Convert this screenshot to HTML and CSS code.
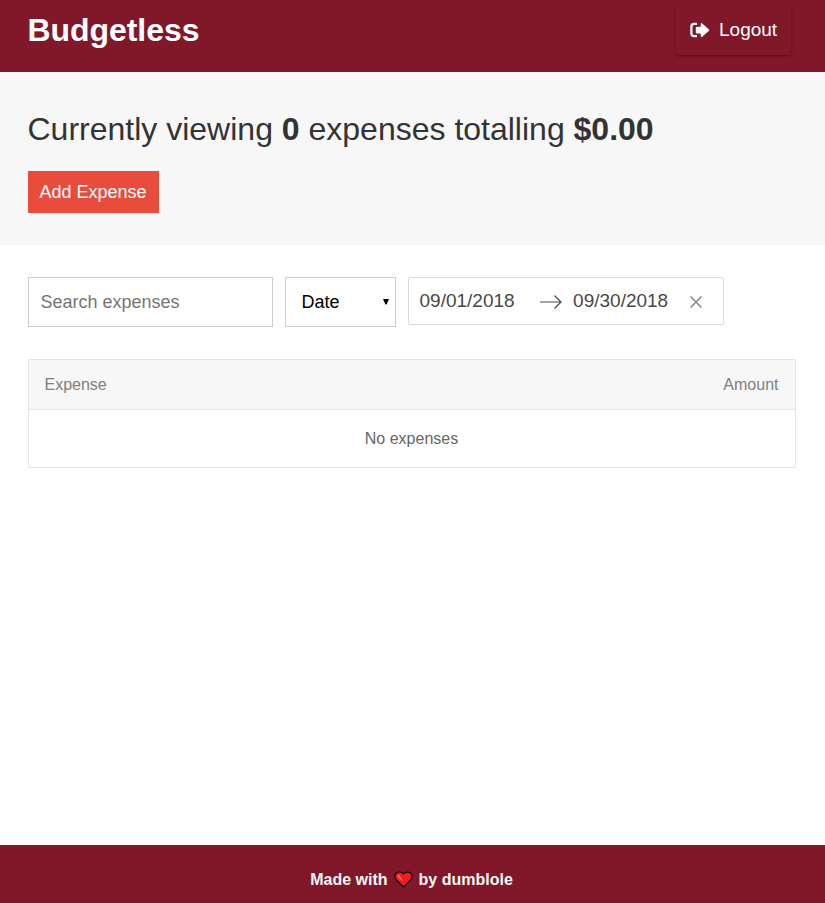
FILE: index.html
```html
<!DOCTYPE html>
<html lang="en">
<head>
<meta charset="utf-8">
<title>Budgetless</title>
<link rel="stylesheet" href="styles.css">
</head>
<body>
<header class="header">
  <h1 class="header-title">Budgetless</h1>
  <button class="logout" type="button">
    <svg class="logout-icon" viewBox="0 0 20 16" aria-hidden="true">
      <path d="M7 1.8H4.2Q1.4 1.8 1.4 4.4V11.6Q1.4 14.2 4.2 14.2H7" fill="none" stroke="#fff" stroke-width="2.2"/>
      <path d="M7 4.8Q5.8 4.8 5.8 5.8V10.4Q5.8 11.4 7 11.4H10.8V14.2Q11.1 15.5 12.2 14.7L19 8.8Q19.6 8.1 19 7.4L12.2 1.4Q11.1.6 10.8 2V4.8Z" fill="#fff"/>
    </svg>
    <span>Logout</span>
  </button>
</header>
<section class="summary">
  <h2 class="summary-title">Currently viewing <b>0</b> expenses totalling <b>$0.00</b></h2>
  <button class="add" type="button">Add Expense</button>
</section>
<main class="content">
  <div class="filters">
    <input class="search" type="text" placeholder="Search expenses">
    <div class="select"><span>Date</span>
      <svg class="caret" viewBox="0 0 6 6" aria-hidden="true"><path d="M0 0H6L3.5 5.5H2.5Z"/></svg>
    </div>
    <div class="dates">
      <span class="date">09/01/2018</span>
      <svg class="arrow" viewBox="0 0 24 16" aria-hidden="true"><path d="M1 8H22M15.5 1.5L22 8L15.5 14.5"/></svg>
      <span class="date">09/30/2018</span>
      <svg class="clear" viewBox="0 0 12 12" aria-hidden="true"><path d="M.5.5L11.5 11.5M11.5.5L.5 11.5"/></svg>
    </div>
  </div>
  <div class="list">
    <div class="list-header"><span>Expense</span><span>Amount</span></div>
    <div class="list-empty">No expenses</div>
  </div>
</main>
<footer class="footer">
  <span>Made with</span>
  <svg class="heart" viewBox="0 0 19 17" aria-hidden="true">
    <path d="M9.5 16L2 8.6Q.2 6 1.2 3.5Q2.5 1 5.2 1Q8 1 9.5 3Q11 1 13.8 1Q16.5 1 17.8 3.5Q18.8 6 17 8.6Z" fill="#ed1c24" stroke="#000" stroke-width="1.2"/>
    <path d="M3.6 4.2Q5.2 2.8 6.3 5L8.8 10.3Q5 8.4 3.6 6Z" fill="#f26541"/>
  </svg>
  <span>by dumblole</span>
</footer>
</body>
</html>
```
FILE: styles.css
```css
* { box-sizing: border-box; }
body {
  margin: 0;
  min-height: 903px;
  display: flex;
  flex-direction: column;
  font-family: "Liberation Sans", Arial, sans-serif;
  font-size: 16px;
  color: #333;
  background: #fff;
}
button { border: 0; font-family: inherit; color: #fff; }
.header {
  height: 72px;
  padding: 5px 34px 0 27.5px;
  display: flex;
  justify-content: space-between;
  align-items: flex-start;
  background: #81182a;
}
.header-title { margin: 6px 0 0; font-size: 32px; line-height: 38px; letter-spacing: -.06px; color: #fff; }
.logout {
  width: 115px;
  height: 50px;
  padding: 0 0 0 14px;
  display: flex;
  align-items: center;
  gap: 9px;
  font-size: 19px;
  background: none;
  border-radius: 3px;
  box-shadow: 0 1px 3px rgba(0, 0, 0, .38);
}
.logout-icon { width: 20px; height: 16px; flex: none; }
.summary { height: 173px; padding: 38px 28px 0; background: #f7f7f7; }
.summary-title { margin: 0 0 23px -.5px; font-size: 32px; line-height: 38px; font-weight: 400; white-space: nowrap; }
.add {
  display: block;
  width: 131px;
  height: 42px;
  padding: 0 1px 0 0;
  font-size: 18px;
  background: #e84c3d;
}
.content { flex: 1; padding: 32px 29px 0 28px; }
.filters { display: flex; align-items: flex-start; gap: 12px; margin-bottom: 32px; }
.search {
  width: 245px;
  height: 50px;
  padding: 0 11.5px;
  border: 1px solid #cacccd;
  font-family: inherit;
  font-size: 18px;
}
.search::placeholder { color: #757575; }
.select {
  width: 111px;
  height: 50px;
  padding: 0 6px 0 15.5px;
  display: flex;
  align-items: center;
  justify-content: space-between;
  border: 1px solid #cacccd;
  font-size: 18px;
  color: #000;
}
.caret { width: 6px; height: 6px; }
.dates {
  width: 316px;
  height: 48px;
  padding: 0 0 0 10.5px;
  display: flex;
  align-items: center;
  border: 1px solid #dbdbdb;
  border-radius: 2px;
  font-size: 19px;
  color: #484848;
}
.arrow { width: 24px; height: 16px; margin: 2px 10px 0 24.5px; fill: none; stroke: #484848; stroke-width: 1.2; }
.clear { width: 12px; height: 12px; margin: 2px 0 0 22px; fill: none; stroke: #82888a; stroke-width: 1.5; }
.list { height: 109px; border: 1px solid #e5e5e5; }
.list-header {
  height: 50px;
  padding: 0 16.5px 0 15.5px;
  display: flex;
  align-items: center;
  justify-content: space-between;
  border-bottom: 1px solid #e5e5e5;
  background: #f7f7f7;
  color: #808080;
}
.list-empty { height: 57px; padding-right: 1px; line-height: 57px; text-align: center; color: #666; }
.footer {
  height: 58px;
  padding: 11px 2px 0 0;
  display: flex;
  align-items: center;
  justify-content: center;
  gap: 6px;
  background: #81182a;
  color: #f7f7f7;
  font-weight: 700;
}
.heart { width: 19px; height: 17px; }
```
